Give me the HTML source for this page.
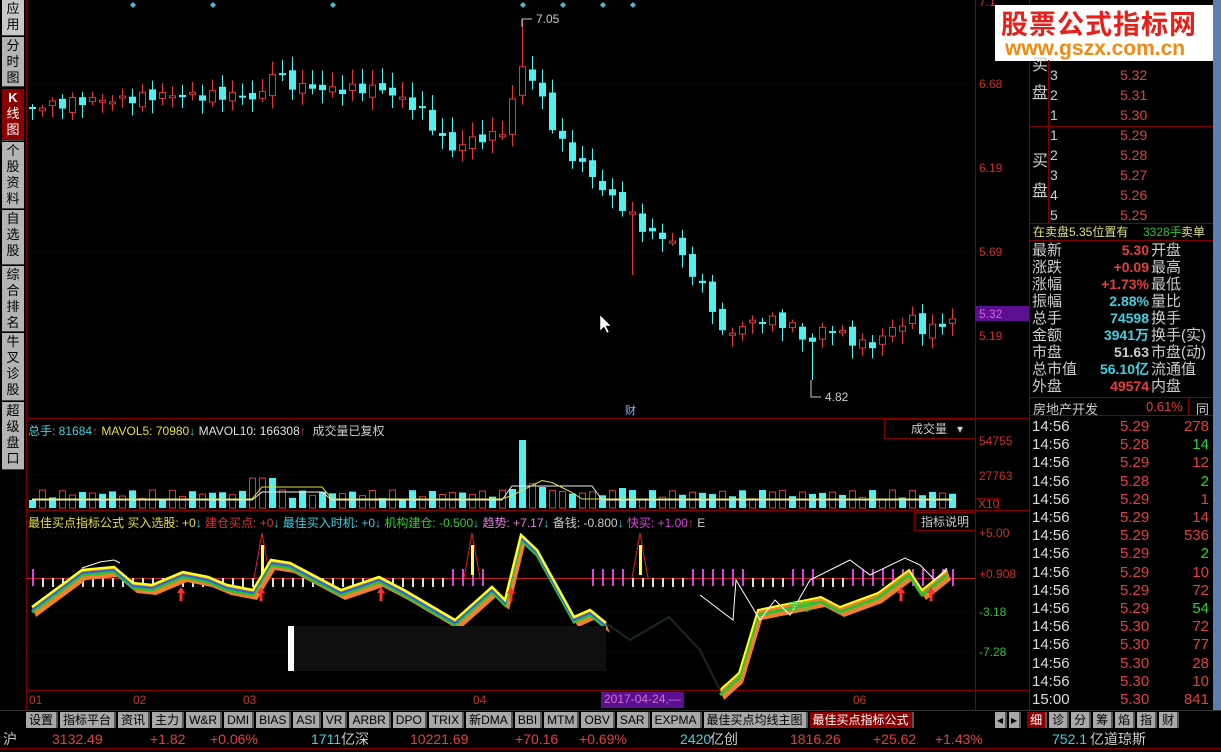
<!DOCTYPE html>
<html><head><meta charset="utf-8">
<style>
*{margin:0;padding:0;box-sizing:border-box}
body{width:1221px;height:752px;background:#000;overflow:hidden;position:relative;font-family:"Liberation Sans","Noto Sans CJK SC",sans-serif;font-size:12px;color:#c0c0c0}
.a{position:absolute;white-space:nowrap}
#side{position:absolute;left:0;top:0;width:25px;height:752px;background:#000}
.sb{position:absolute;left:2px;width:22px;background:#b4b4b4;color:#000;font-size:13px;line-height:16px;text-align:center;border-bottom:1px solid #444;padding-top:1px}
.rp{position:absolute;font-size:14px;line-height:17px}
.tab{display:inline-block;height:16px;line-height:16px;padding:0 3px;background:#a8a8a8;color:#000;font-size:12px;margin-right:2px;border-right:2px solid #555}
</style></head><body>
<div id="side">
<div class="sb" style="top:0;height:36px;background:#c8c8c8">应<br>用</div>
<div class="sb" style="top:37px;height:50px">分<br>时<br>图</div>
<div class="sb" style="top:89px;height:52px;background:#8a0000;color:#fff"><b>K</b><br>线<br>图</div>
<div class="sb" style="top:142px;height:67px">个<br>股<br>资<br>料</div>
<div class="sb" style="top:210px;height:55px">自<br>选<br>股</div>
<div class="sb" style="top:266px;height:66px">综<br>合<br>排<br>名</div>
<div class="sb" style="top:333px;height:68px">牛<br>叉<br>诊<br>股</div>
<div class="sb" style="top:402px;height:68px">超<br>级<br>盘<br>口</div>
</div>
<svg id="sv" class="a" style="left:0;top:0" width="1221" height="752" xmlns="http://www.w3.org/2000/svg">
<g stroke="#800000" fill="none">
<line x1="26" y1="418.5" x2="1029" y2="418.5"/>
<line x1="26" y1="510.5" x2="1029" y2="510.5"/>
<line x1="26" y1="690.5" x2="1029" y2="690.5"/>
<line x1="975.5" y1="0" x2="975.5" y2="710"/>
<line x1="1029.5" y1="0" x2="1029.5" y2="710"/>
<line x1="26.5" y1="0" x2="26.5" y2="710"/>
</g>
<g stroke="#600000" stroke-dasharray="1,3">
<line x1="27" y1="84" x2="975" y2="84"/><line x1="27" y1="168" x2="975" y2="168"/>
<line x1="27" y1="252" x2="975" y2="252"/><line x1="27" y1="336" x2="975" y2="336"/>
<line x1="27" y1="441" x2="975" y2="441"/><line x1="27" y1="475" x2="975" y2="475"/>
<line x1="27" y1="533" x2="975" y2="533"/><line x1="27" y1="612" x2="975" y2="612"/><line x1="27" y1="652" x2="975" y2="652"/>
</g>
<g id="cd"></g><g id="vol"></g><g id="ind"></g>
<rect x="975" y="306" width="54" height="15" fill="#5a1090"/>
<g font-size="12" fill="#c83030" font-family="Liberation Sans">
<text x="979" y="6">7.1</text>
<text x="979" y="88">6.68</text><text x="979" y="172">6.19</text><text x="979" y="256">5.69</text>
<text x="979" y="318" fill="#e060e0">5.32</text><text x="979" y="340">5.19</text>
<text x="979" y="445">54755</text><text x="979" y="480">27763</text>
<text x="979" y="537">+5.00</text><text x="979" y="578">+0.908</text>
<text x="979" y="616" fill="#30c030">-3.18</text><text x="979" y="656" fill="#30c030">-7.28</text>
</g>
<rect x="975.5" y="498.5" width="23" height="12" fill="none" stroke="#800000"/>
<text x="978" y="508" font-size="12" fill="#c83030">X10</text>
<g fill="#40c0d0">
<path d="M133 2l3 3-3 3-3-3z"/><path d="M213 2l3 3-3 3-3-3z"/><path d="M333 2l3 3-3 3-3-3z"/><path d="M523 2l3 3-3 3-3-3z"/><path d="M563 2l3 3-3 3-3-3z"/><path d="M603 2l3 3-3 3-3-3z"/><path d="M633 2l3 3-3 3-3-3z"/>
</g>
<path d="M532 19h-10v8" stroke="#ccc" fill="none"/><text x="536" y="23" fill="#ccc" font-size="12">7.05</text>
<path d="M811 380v17h10" stroke="#ccc" fill="none"/><text x="825" y="401" fill="#ccc" font-size="12">4.82</text>
<text x="625" y="414" fill="#8ab0ff" font-size="11">财</text>
<path d="M600 315v16l4-4 3 6 2-1-3-6h5z" fill="#fff" stroke="#000" stroke-width=".5"/>
<rect x="288" y="626" width="6" height="45" fill="#fff"/>
<rect x="294" y="626" width="312" height="45" fill="#101010"/>
</svg>

<div class="a" style="left:28px;top:422px;font-size:12px"><span style="color:#40d0e0">总手: 81684</span><span style="color:#e03030">↑</span> <span style="color:#e0e040">MAVOL5: 70980</span><span style="color:#40d0e0">↓</span> <span style="color:#e0e0e0">MAVOL10: 166308</span><span style="color:#e03030">↑</span> &nbsp;<span style="color:#ccc">成交量已复权</span></div>
<div class="a" style="left:884px;top:419px;width:92px;height:20px;border:1px solid #800000;color:#ccc;font-size:12px;line-height:19px;padding-left:26px">成交量 &nbsp; ▾</div>
<div class="a" style="left:28px;top:514px;font-size:12px"><span style="color:#e0e040">最佳买点指标公式 买入选股: +0</span><span style="color:#40d0e0">↓</span> <span style="color:#e03030">建仓买点: +0</span><span style="color:#40d0e0">↓ 最佳买入时机: +0↓</span> <span style="color:#30d030">机构建仓: -0.500</span><span style="color:#40d0e0">↓</span> <span style="color:#e080e0">趋势: +7.17</span><span style="color:#40d0e0">↓</span> <span style="color:#ccc">备钱: -0.800</span><span style="color:#40d0e0">↓</span> <span style="color:#e040e0">快买: +1.00</span><span style="color:#e03030">↑</span> <span style="color:#ccc">E</span></div>
<div class="a" style="left:914px;top:512px;width:62px;height:19px;border:1px solid #800000;color:#ccc;font-size:12px;line-height:18px;text-align:center">指标说明</div>
<div class="a" style="left:788px;top:598px;color:#30d030;font-size:12px">底部</div>

<div class="a" style="left:27px;top:693px;font-size:12px;color:#c83030;width:948px">
<span class="a" style="left:2px">01</span><span class="a" style="left:106px">02</span><span class="a" style="left:216px">03</span><span class="a" style="left:446px">04</span><span class="a" style="left:826px">06</span>
<span class="a" style="left:574px;top:-1px;background:#5a1090;color:#d070d0;padding:0 3px;height:16px">2017-04-24,—</span></div>

<div class="a" style="left:0;top:710px;width:1221px;height:19px;background:#000;border-top:1px solid #333"></div>
<div class="a" style="left:26px;top:712px;font-size:0">
<span class="tab">设置</span><span class="tab">指标平台</span><span class="tab">资讯</span><span class="tab">主力</span><span class="tab">W&amp;R</span><span class="tab">DMI</span><span class="tab">BIAS</span><span class="tab">ASI</span><span class="tab">VR</span><span class="tab">ARBR</span><span class="tab">DPO</span><span class="tab">TRIX</span><span class="tab">新DMA</span><span class="tab">BBI</span><span class="tab">MTM</span><span class="tab">OBV</span><span class="tab">SAR</span><span class="tab">EXPMA</span><span class="tab">最佳买点均线主图</span><span class="tab" style="background:#8a0000;color:#fff">最佳买点指标公式</span></div>
<div class="a" style="left:995px;top:712px;font-size:0"><span class="tab" style="padding:0 2px">◂</span><span class="tab" style="padding:0 2px;margin-right:6px">▸</span><span class="tab" style="background:#8a0000;color:#fff">细</span><span class="tab">诊</span><span class="tab">分</span><span class="tab">筹</span><span class="tab">焰</span><span class="tab">指</span><span class="tab">财</span></div>
<div class="a" style="left:0;top:729px;width:1221px;height:20px;font-size:14px;line-height:20px;border-bottom:1px solid #800000">
<span class="a" style="left:3px;color:#ccc">沪</span><span class="a" style="left:52px;color:#e04040">3132.49</span><span class="a" style="left:150px;color:#e04040">+1.82</span><span class="a" style="left:210px;color:#e04040">+0.06%</span><span class="a" style="left:311px;color:#40d0e0">1711</span><span class="a" style="left:341px;color:#ccc">亿深</span><span class="a" style="left:410px;color:#e04040">10221.69</span><span class="a" style="left:515px;color:#e04040">+70.16</span><span class="a" style="left:579px;color:#e04040">+0.69%</span><span class="a" style="left:680px;color:#40d0e0">2420</span><span class="a" style="left:710px;color:#ccc">亿创</span><span class="a" style="left:790px;color:#e04040">1816.26</span><span class="a" style="left:873px;color:#e04040">+25.62</span><span class="a" style="left:935px;color:#e04040">+1.43%</span><span class="a" style="left:1052px;color:#40d0e0">752.1</span><span class="a" style="left:1090px;color:#ccc">亿道琼斯</span></div>

<div class="a" style="left:1213px;top:0;width:8px;height:710px;background:#5a7fb0"></div>
<div class="a" style="left:995px;top:5px;width:218px;height:56px;background:#fff"></div>
<div class="a" style="left:1001px;top:3px;font-size:27px;font-weight:bold;color:#e8201a;letter-spacing:1px">股票公式指标网</div>
<div class="a" style="left:1005px;top:37px;font-size:21px;font-weight:bold;color:#f08a10">www.gszx.com.cn</div>
<svg class="a" style="left:1030px;top:0" width="183" height="710">
<g stroke="#800000"><line x1="0" y1="126.5" x2="183" y2="126.5"/><line x1="0" y1="223.5" x2="183" y2="223.5"/><line x1="0" y1="240.5" x2="183" y2="240.5"/><line x1="0" y1="397.5" x2="183" y2="397.5"/><line x1="0" y1="415.5" x2="183" y2="415.5"/><line x1="18.5" y1="60" x2="18.5" y2="223"/><line x1="158.5" y1="397" x2="158.5" y2="415"/></g></svg>
<div class="rp" style="left:1032px;top:52px;color:#ccc;font-size:16px;line-height:28px">买<br>盘</div>
<div class="rp" style="left:1032px;top:147px;color:#ccc;font-size:16px;line-height:30px">买<br>盘</div>
<div id="ob"></div>
<div class="a" style="left:1033px;top:224px;font-size:12px;line-height:16px;width:180px"><span style="color:#e0e080">在卖盘5.35位置有</span><span class="a" style="left:110px;color:#30c030">3328手</span><span class="a" style="left:148px;color:#e0e080">卖单</span></div>
<div id="st"></div>
<div class="a" style="left:1033px;top:399px;font-size:13px;color:#ccc">房地产开发</div>
<div class="a" style="left:1146px;top:399px;font-size:13px;color:#e04040">0.61%</div>
<div class="a" style="left:1196px;top:399px;font-size:13px;color:#ccc">同</div>
<div id="tk"></div>

<script>
(function(){
var NS="http://www.w3.org/2000/svg";
function el(p,t,a){var e=document.createElementNS(NS,t);for(var k in a)e.setAttribute(k,a[k]);p.appendChild(e);return e;}
function interp(kp,x){for(var i=0;i<kp.length-1;i++){if(x<=kp[i+1][0]){var t=(x-kp[i][0])/(kp[i+1][0]-kp[i][0]);return kp[i][1]+t*(kp[i+1][1]-kp[i][1]);}}return kp[kp.length-1][1];}
var kp=[[32,107],[60,104],[90,100],[120,100],[160,95],[200,96],[240,95],[260,100],[272,70],[290,85],[330,90],[380,88],[420,110],[450,150],[470,140],[500,135],[510,110],[522,65],[535,85],[545,105],[555,135],[575,160],[590,172],[602,190],[615,200],[630,215],[650,235],[670,238],[690,270],[710,300],[720,335],[740,328],[760,318],[790,325],[810,345],[825,325],[850,340],[870,347],[890,330],[910,318],[925,332],[950,320]];
var cd=document.getElementById('cd');var prev=107;
for(var i=0;i<93;i++){var x=32+i*10;var c=interp(kp,x)+Math.sin(i*2.7)*5;var o=prev+Math.sin(i*1.9)*4;
 var hi=Math.min(o,c)-3-Math.abs(Math.sin(i*3.1))*12, lo=Math.max(o,c)+3+Math.abs(Math.cos(i*1.3))*10;
 if(x==522){hi=20;} if(x==812){lo=380;} if(x==632){lo=275;}
 var up=c<o;var col=up?'#e03838':'#50f0f0';
 el(cd,'line',{x1:x+.5,y1:hi,x2:x+.5,y2:lo,stroke:col});
 var bt=Math.min(o,c),bh=Math.max(2,Math.abs(o-c));
 if(up)el(cd,'rect',{x:x-2.5,y:bt,width:6,height:bh,fill:'#000',stroke:col});else el(cd,'rect',{x:x-3,y:bt,width:7,height:bh,fill:col});
 prev=c;}
var vg=document.getElementById('vol');var ypts=[],wpts=[];
for(var i=0;i<93;i++){var x=32+i*10;var h=8+Math.abs(Math.sin(i*1.7))*10;
 if(x>=250&&x<=280)h=30; if(x==522)h=68; if(x>=510&&x<=560)h=Math.max(h,25-(Math.abs(x-530)/3)); if(x==622)h=20;if(x==772||x==802)h=16;
 var up=Math.sin(i*2.3)>0;var col=up?'#e03838':'#50f0f0';
 if(up)el(vg,'rect',{x:x-2.5,y:508-h,width:6,height:h,fill:'#000',stroke:col});else el(vg,'rect',{x:x-3,y:508-h,width:7,height:h,fill:col});
 var yy=499-(x>260&&x<330?12:0)-(x>510&&x<580?20-Math.abs(x-545)/2:0);ypts.push(x+','+yy.toFixed(1));
 var ww=500-(x>260&&x<330?8:0)-(x>510&&x<600?14:0);wpts.push(x+','+ww);}
el(vg,'polyline',{points:wpts.join(' '),fill:'none',stroke:'#eee'});
el(vg,'polyline',{points:ypts.join(' '),fill:'none',stroke:'#e0e040'});
var ig=document.getElementById('ind');
el(ig,'line',{x1:27,y1:578.5,x2:975,y2:578.5,stroke:'#c02020'});
for(var x=32;x<955;x+=10){var pink=(x>=450&&x<490)||(x>=590&&x<630)||(x>=690&&x<745)||(x>=790&&x<820)||(x>=850&&x<955)||x<36;
 if(pink)el(ig,'rect',{x:x,y:569,width:2,height:17,fill:'#e040e0'});else if(!(x>490&&x<590&&x%20))el(ig,'rect',{x:x,y:578,width:2,height:9,fill:'#ddd'});}
[262,472,640].forEach(function(x){el(ig,'polyline',{points:(x-8)+',578 '+x+',533 '+(x+8)+',578',fill:'none',stroke:'#e02020'});el(ig,'rect',{x:x-1,y:545,width:3,height:30,fill:'#ffff40'});});
var mp=[[32,607],[82,570],[114,567],[133,583],[152,585],[183,572],[208,577],[227,585],[253,590],[271,560],[290,563],[341,590],[379,577],[404,590],[455,620],[492,587],[505,600],[521,535],[537,550],[574,617],[590,610],[606,623]];
var mp2=[[720,690],[739,673],[758,610],[821,597],[840,607],[878,593],[909,570],[922,590],[947,570]];
function pts(a,dy){return a.map(function(p){return p[0]+','+(p[1]+dy)}).join(' ')}
function area(a,dy,col){var s=a.map(function(p){return p[0]+','+p[1]});var r=a.slice().reverse().map(function(p){return (p[0]+4)+','+(p[1]+dy)});el(ig,'polygon',{points:s.concat(r).join(' '),fill:col});}
area(mp,10,'#f08030');area(mp2,10,'#f08030');
el(ig,'polyline',{points:pts(mp,5),fill:'none',stroke:'#30c030','stroke-width':3});
el(ig,'polyline',{points:pts(mp,3),fill:'none',stroke:'#3060e0','stroke-width':2});
el(ig,'polyline',{points:pts(mp,0),fill:'none',stroke:'#ffff20','stroke-width':2.5});
el(ig,'polyline',{points:pts(mp2,5),fill:'none',stroke:'#30c030','stroke-width':3});
el(ig,'polyline',{points:pts(mp2,0),fill:'none',stroke:'#ffff20','stroke-width':2});
el(ig,'polyline',{points:'606,623 630,640 669,617 700,650 720,690',fill:'none',stroke:'#1a2a1a','stroke-width':2});
el(ig,'polyline',{points:'700,595 733,620 736,580 760,620 775,600 790,615 810,580 850,560 870,575 905,558 920,565 935,580 947,568',fill:'none',stroke:'#fff'});
el(ig,'polyline',{points:'82,568 100,562 114,560 120,563',fill:'none',stroke:'#fff'});
[181,261,381,511,901,931].forEach(function(x){el(ig,'path',{d:'M'+x+' 587l-4 6h2.5v8h3v-8h2.5z',fill:'#ff3030'});});
var ob='';[['3','5.32',76],['2','5.31',96],['1','5.30',116],['1','5.29',136],['2','5.28',156],['3','5.27',176],['4','5.26',196],['5','5.25',216]].forEach(function(r){
ob+='<div class="rp" style="left:1050px;top:'+(r[2]-9)+'px;color:#ccc">'+r[0]+'</div><div class="rp" style="left:1120px;top:'+(r[2]-9)+'px;color:#e04040">'+r[1]+'</div>';});
document.getElementById('ob').innerHTML=ob;
var st='';[['最新','5.30','#e04040','开盘'],['涨跌','+0.09','#e04040','最高'],['涨幅','+1.73%','#e04040','最低'],['振幅','2.88%','#40d0e0','量比'],['总手','74598','#40d0e0','换手'],['金额','3941万','#40d0e0','换手(实)'],['市盘','51.63','#ccc','市盘(动)'],['总市值','56.10亿','#40d0e0','流通值'],['外盘','49574','#e04040','内盘']].forEach(function(r,i){var y=242+i*17;
st+='<div class="rp" style="left:1032px;top:'+y+'px;color:#ccc;font-size:15px">'+r[0]+'</div><div class="rp" style="right:72px;top:'+y+'px;color:'+r[2]+';font-weight:bold">'+r[1]+'</div><div class="rp" style="left:1151px;top:'+y+'px;color:#ccc;font-size:15px">'+r[3]+'</div>';});
document.getElementById('st').innerHTML=st;
var tk='';[['5.29','278',1],['5.28','14',0],['5.29','12',1],['5.28','2',0],['5.29','1',1],['5.29','14',1],['5.29','536',1],['5.29','2',0],['5.29','10',1],['5.29','72',1],['5.29','54',0],['5.30','72',1],['5.30','77',1],['5.30','28',1],['5.30','10',1],['5.30','841',1]].forEach(function(r,i){var y=418+i*18.2;
tk+='<div class="rp" style="left:1032px;top:'+y+'px;color:#ddd;font-size:15px">'+(i==15?'15:00':'14:56')+'</div><div class="rp" style="left:1120px;top:'+y+'px;color:#e04040;font-size:15px">'+r[0]+'</div><div class="rp" style="right:12px;top:'+y+'px;color:'+(r[2]?'#e04040':'#30d030')+';font-size:15px">'+r[1]+'</div>';});
document.getElementById('tk').innerHTML=tk;
})();
</script>
</body></html>
